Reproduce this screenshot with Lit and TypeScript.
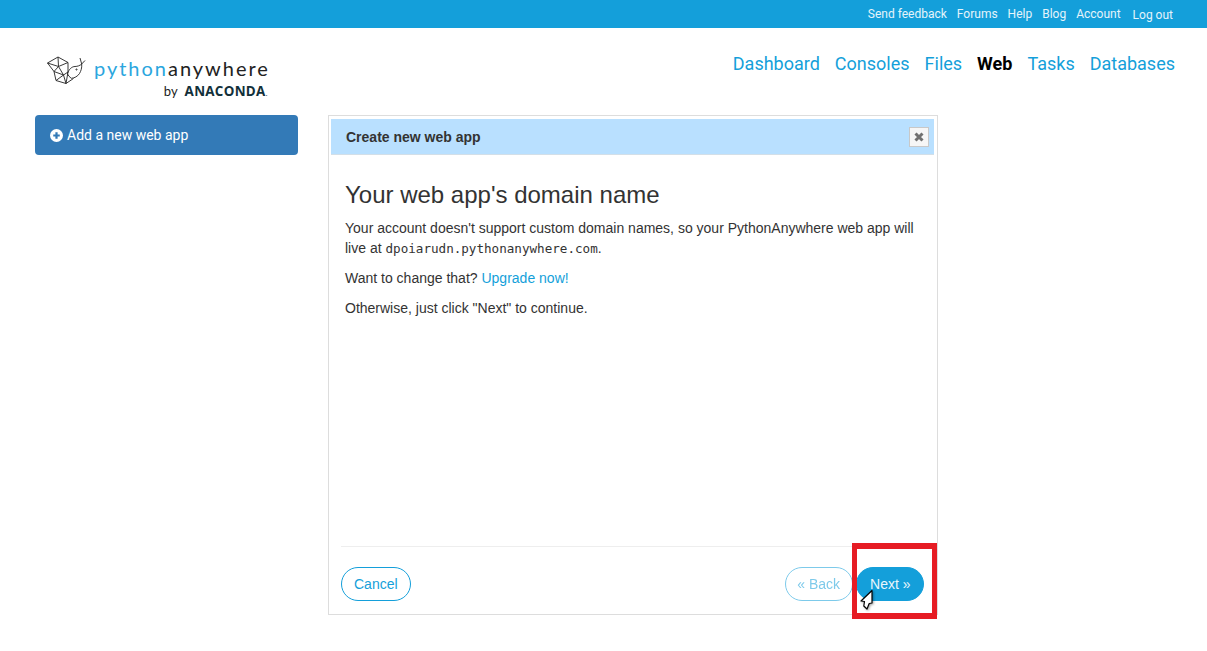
import { LitElement, html, css } from 'lit';
import { customElement } from 'lit/decorators.js';

const TOP_LINKS = ['Send feedback', 'Forums', 'Help', 'Blog', 'Account'];
const NAV_LINKS = ['Dashboard', 'Consoles', 'Files', 'Web', 'Tasks', 'Databases'];

@customElement('app-root')
export class AppRoot extends LitElement {
  static styles = css`
    :host {
      display: block;
      height: 651px;
      overflow: hidden;
      background: #fff;
      color: #333;
      font-family: Roboto, "Liberation Sans", sans-serif;
      font-size: 14px;
    }
    a { text-decoration: none; color: #149fda; }

    .topbar {
      height: 28px;
      background: #149fda;
      display: flex;
      justify-content: flex-end;
      padding-right: 34px;
      box-sizing: border-box;
      font-size: 12px;
    }
    .topbar a { color: #e4f4fb; margin-left: 10px; line-height: 28px; }
    .topbar a.logout { margin-left: 12px; line-height: 30px; }

    .header {
      height: 87px;
      display: flex;
      justify-content: space-between;
      padding: 0 32px 0 44px;
    }
    .logo { padding-top: 24px; width: 224px; }
    .logo-main {
      display: flex;
      align-items: flex-start;
      height: 36px;
    }
    .logo-main svg { display: block; margin-right: 6px; flex: none; }
    .wordmark {
      font-family: Lato, sans-serif;
      font-weight: 400;
      font-size: 20px;
      letter-spacing: 1.98px;
      color: #222;
      line-height: 28px;
      margin-top: 2px;
      white-space: nowrap;
    }
    .wordmark span { color: #2ba6de; }
    .by {
      display: flex;
      justify-content: flex-end;
      align-items: baseline;
      gap: 7px;
      margin-top: -6px;
      color: #222;
      font-family: Lato, sans-serif;
      font-size: 13px;
      line-height: 18px;
    }
    .by b {
      font-family: "Open Sans", sans-serif;
      font-weight: 700;
      font-size: 13.4px;
      letter-spacing: 0.3px;
      color: #12303a;
    }
    .by b span { font-size: 8px; font-weight: 400; }
    .nav { display: flex; gap: 15px; padding-top: 23px; font-size: 18px; line-height: 26px; }
    .nav a.active { color: #000; font-weight: 700; }

    .main { display: flex; padding-left: 35px; align-items: flex-start; }
    .add {
      width: 263px;
      height: 40px;
      box-sizing: border-box;
      background: #337ab7;
      border-radius: 4px;
      color: #fff;
      padding-left: 15px;
      display: flex;
      align-items: center;
      gap: 4px;
      flex: none;
    }
    .dialog {
      margin-left: 30px;
      width: 610px;
      height: 500px;
      box-sizing: border-box;
      border: 1px solid #ddd;
      padding: 3px 3px 0 2px;
      display: flex;
      flex-direction: column;
      flex: none;
      font-family: "Liberation Sans", Arial, sans-serif;
    }
    .title {
      height: 36px;
      box-sizing: border-box;
      background: #b9e0ff;
      border-bottom: 1px solid #d3dfe8;
      display: flex;
      align-items: center;
      justify-content: space-between;
      padding: 0 5px 0 15px;
      font-weight: 700;
      color: #333;
    }
    .close {
      width: 20px;
      height: 20px;
      box-sizing: border-box;
      border: 1px solid #c8c8c8;
      background: #f6f6f6;
      display: flex;
      align-items: center;
      justify-content: center;
      margin-top: 1px;
    }
    .body { flex: 1; padding: 0 14px; }
    h2 {
      font-weight: 400;
      font-size: 24px;
      line-height: 26px;
      margin: 27px 0 10px;
      color: #333;
    }
    p {
      margin: 0 0 10px;
      font-size: 14px;
      line-height: 20px;
    }
    code { font-family: "DejaVu Sans Mono", monospace; font-size: 12.6px; line-height: 1; }
    .footer {
      margin: 0 10px 0 10px;
      height: 68px;
      border-top: 1px solid #eee;
      display: flex;
      justify-content: space-between;
      align-items: flex-start;
      padding: 20px 0 0;
      box-sizing: border-box;
    }
    .buttons { display: flex; gap: 3px; }
    .btn {
      height: 34px;
      box-sizing: border-box;
      border-radius: 17px;
      border: 1px solid #149fda;
      padding: 0 12px;
      background: #fff;
      color: #149fda;
      font-size: 14px;
      line-height: 32px;
    }
    .btn.back { opacity: 0.55; padding: 0 11.5px; }
    .btn.next { background: #149fda; color: #eaf6fc; padding: 0 12.5px 0 13.5px; }

    .highlight {
      position: absolute;
      left: 852px;
      top: 543px;
      width: 85px;
      height: 76px;
      box-sizing: border-box;
      border: solid #e61c24;
      border-width: 6px 5px;
    }
    .cursor {
      position: absolute;
      left: 858px;
      top: 588px;
      filter: drop-shadow(1px 1px 1px rgba(0, 0, 0, 0.35));
    }
  `;

  render() {
    return html`
      <div class="topbar">
        ${TOP_LINKS.map((l) => html`<a href="#">${l}</a>`)}
        <a class="logout" href="#">Log out</a>
      </div>
      <div class="header">
        <div class="logo">
          <div class="logo-main">
            <svg width="44" height="36" viewBox="44 52 44 36" fill="none" stroke="#222" stroke-width="0.9" stroke-linejoin="round">
              <path d="M47.500 63 L58 57 L68 62.500 L68 72 L66 83.500 L56 80.500 L54 71.500 Z" />
              <path d="M47.500 63 L58.500 66.500 L58 57 M58.500 66.500 L68 62.500 M58.500 66.500 L54 71.500 L63.500 75 L58.500 66.500 M63.500 75 L68 72 M63.500 75 L56 80.500 M63.500 75 L66 83.500" />
              <path d="M66 83.500 L73.500 78.500" />
              <path d="M67.500 73.500 C69 69 72 66.500 75 66.500 C77.500 66.500 80 65.500 81.700 64 C82 68 81 71 79.500 73.500 C77.500 76.500 74.500 78 71.500 78.300 C69.500 77 68 75.500 67.500 73.500 Z" />
              <path d="M81.700 64 L80 58 M81.700 64 L85 60.500" />
              <circle cx="76.500" cy="69.500" r="0.600" />
            </svg>
            <span class="wordmark"><span>python</span>anywhere</span>
          </div>
          <div class="by">by <b>ANACONDA<span>.</span></b></div>
        </div>
        <nav class="nav">
          ${NAV_LINKS.map((l) => html`<a href="#" class=${l === 'Web' ? 'active' : ''}>${l}</a>`)}
        </nav>
      </div>
      <div class="main">
        <a class="add" href="#">
          <svg width="13" height="13" viewBox="0 0 14 14">
            <circle cx="7" cy="7" r="7" fill="#fff" />
            <path d="M7 3.500 V10.500 M3.500 7 H10.500" stroke="#337ab7" stroke-width="2.400" />
          </svg>
          Add a new web app
        </a>
        <div class="dialog">
          <div class="title">
            <span>Create new web app</span>
            <span class="close">
              <svg width="10" height="10" viewBox="0 0 10 10">
                <path d="M1.500 1.500 L8.500 8.500 M8.500 1.500 L1.500 8.500" stroke="#707070" stroke-width="3" />
              </svg>
            </span>
          </div>
          <div class="body">
            <h2>Your web app's domain name</h2>
            <p>Your account doesn't support custom domain names, so your PythonAnywhere web app will live at <code>dpoiarudn.pythonanywhere.com</code>.</p>
            <p>Want to change that? <a href="#">Upgrade now!</a></p>
            <p>Otherwise, just click "Next" to continue.</p>
          </div>
          <div class="footer">
            <a class="btn" href="#">Cancel</a>
            <div class="buttons">
              <a class="btn back" href="#">« Back</a>
              <a class="btn next" href="#">Next »</a>
            </div>
          </div>
        </div>
      </div>
      <div class="highlight"></div>
      <svg class="cursor" width="18" height="24" viewBox="0 0 18 24">
        <path d="M14 2.500 L3 13 L6.500 13.500 L5.800 18 L9 21 L11.200 15.500 L14 15 Z" fill="#fff" stroke="#000" stroke-width="1.200" stroke-linejoin="round" />
      </svg>
    `;
  }
}

declare global {
  interface HTMLElementTagNameMap {
    'app-root': AppRoot;
  }
}
